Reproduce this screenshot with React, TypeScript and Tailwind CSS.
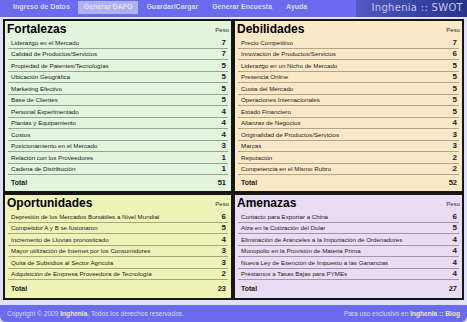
type Item = { label: string; peso: number };

type Quadrant = {
  title: string;
  bg: string;
  line: string;
  items: Item[];
};

const fortalezas: Item[] = [
  { label: "Liderazgo en el Mercado", peso: 7 },
  { label: "Calidad de Productos/Servicios", peso: 7 },
  { label: "Propiedad de Patentes/Tecnologías", peso: 5 },
  { label: "Ubicación Geográfica", peso: 5 },
  { label: "Marketing Efectivo", peso: 5 },
  { label: "Base de Clientes", peso: 5 },
  { label: "Personal Experimentado", peso: 4 },
  { label: "Plantas y Equipamiento", peso: 4 },
  { label: "Costos", peso: 4 },
  { label: "Posicionamiento en el Mercado", peso: 3 },
  { label: "Relación con los Proveedores", peso: 1 },
  { label: "Cadena de Distribución", peso: 1 },
];

const debilidades: Item[] = [
  { label: "Precio Competitivo", peso: 7 },
  { label: "Innovación de Productos/Servicios", peso: 6 },
  { label: "Liderazgo en un Nicho de Mercado", peso: 5 },
  { label: "Presencia Online", peso: 5 },
  { label: "Cuota del Mercado", peso: 5 },
  { label: "Operaciones Internacionales", peso: 5 },
  { label: "Estado Financiero", peso: 5 },
  { label: "Alianzas de Negocios", peso: 4 },
  { label: "Originalidad de Productos/Servicios", peso: 3 },
  { label: "Marcas", peso: 3 },
  { label: "Reputación", peso: 2 },
  { label: "Competencia en el Mismo Rubro", peso: 2 },
];

const oportunidades: Item[] = [
  { label: "Depresión de los Mercados Bursátiles a Nivel Mundial", peso: 6 },
  { label: "Competidor A y B se fusionaron", peso: 5 },
  { label: "Incremento de Lluvias pronosticado", peso: 4 },
  { label: "Mayor utilización de Internet por los Consumidores", peso: 3 },
  { label: "Quita de Subsidios al Sector Agrícola", peso: 3 },
  { label: "Adquisición de Empresa Proveedora de Tecnología", peso: 2 },
];

const amenazas: Item[] = [
  { label: "Contacto para Exportar a China", peso: 6 },
  { label: "Alza en la Cotización del Dolar", peso: 5 },
  { label: "Eliminación de Aranceles a la Importación de Ordenadores", peso: 4 },
  { label: "Monopolio en la Provisión de Materia Prima", peso: 4 },
  { label: "Nueva Ley de Exención de Impuesto a las Ganancias", peso: 4 },
  { label: "Préstamos a Tasas Bajas para PYMEs", peso: 4 },
];

const quadrants: Quadrant[] = [
  { title: "Fortalezas", bg: "bg-[#e3f4df]", line: "border-[#95a593]", items: fortalezas },
  { title: "Debilidades", bg: "bg-[#fbe8c6]", line: "border-[#b6a584]", items: debilidades },
  { title: "Oportunidades", bg: "bg-[#eef4b8]", line: "border-[#a6aa7d]", items: oportunidades },
  { title: "Amenazas", bg: "bg-[#e9dcf3]", line: "border-[#a294af]", items: amenazas },
];

const tabs = ["Ingreso de Datos", "Generar DAFO", "Guardar/Cargar", "Generar Encuesta", "Ayuda"];

function Box({ q }: { q: Quadrant }) {
  const total = q.items.reduce((s, i) => s + i.peso, 0);
  return (
    <div className={`flex flex-col border-2 border-[#161616] pt-[1px] ${q.bg}`}>
      {/* title + Peso */}
      <div className="flex h-[15px] items-center justify-between pl-[2px] pr-[2px]">
        <span className="text-[12px] font-bold leading-[15px] text-black">{q.title}</span>
        <span className="text-[6px] leading-[8px] text-[#333]">Peso</span>
      </div>
      {q.items.map((it) => (
        <div
          key={it.label}
          className={`mx-[3px] flex h-[11.5px] items-end justify-between border-b ${q.line} pb-[1px] pl-[3px] pr-[2px]`}
        >
          <span className="text-[6.2px] leading-[8px] text-[#222]">{it.label}</span>
          <span className="text-[8px] font-bold leading-[8px] text-[#222]">{it.peso}</span>
        </div>
      ))}
      <div className="mx-[3px] flex flex-1 items-center justify-between pl-[3px] pr-[2px]">
        <span className="text-[7px] font-bold text-[#222]">Total</span>
        <span className="text-[7.5px] font-bold text-[#222]">{total}</span>
      </div>
    </div>
  );
}

export default function App() {
  return (
    <div className="flex h-[322px] w-[467px] flex-col overflow-hidden bg-[#e0e0f6] font-['Liberation_Sans',Arial,sans-serif]">
      {/* top nav */}
      <div className="flex h-[17px] shrink-0 bg-[#6b6bef]">
        <div className="flex flex-1 items-start gap-[2px] pl-[7px] pt-[1px]">
          {tabs.map((t) => (
            <div
              key={t}
              className={`flex h-[13px] items-center px-[6px] text-[7px] font-bold ${
                t === "Generar DAFO" ? "bg-[#adb2ef] text-[#dfe0f8]" : "text-[#d6d9fa]"
              }`}
            >
              {t}
            </div>
          ))}
        </div>
        <div className="flex w-[111px] items-center justify-end bg-gradient-to-r from-[#4f58c4] to-[#26348c] pr-[4px] pb-[2px]">
          <span className="font-['DejaVu_Sans',sans-serif] text-[10px] tracking-[0.3px] text-[#c3c7ea]">
            Inghenia :: SWOT
          </span>
        </div>
      </div>

      {/* SWOT grid */}
      <div className="mt-[2px] grid grid-cols-[230px_231px] grid-rows-[174px_107px] px-[3px]">
        {quadrants.map((q) => (
          <Box key={q.title} q={q} />
        ))}
      </div>

      {/* footer */}
      <div className="mt-auto flex h-[17px] items-center justify-between rounded-b-[6px] bg-[#6b6bef] px-[7px] text-[6.6px] text-[#d8daf8]">
        <span>
          Copyright © 2009 <b className="text-[#ececa8]">Inghenia</b>. Todos los derechos reservados.
        </span>
        <span>
          Para uso exclusivo en <b className="text-[#ececa8]">Inghenia :: Blog</b>
        </span>
      </div>
    </div>
  );
}
